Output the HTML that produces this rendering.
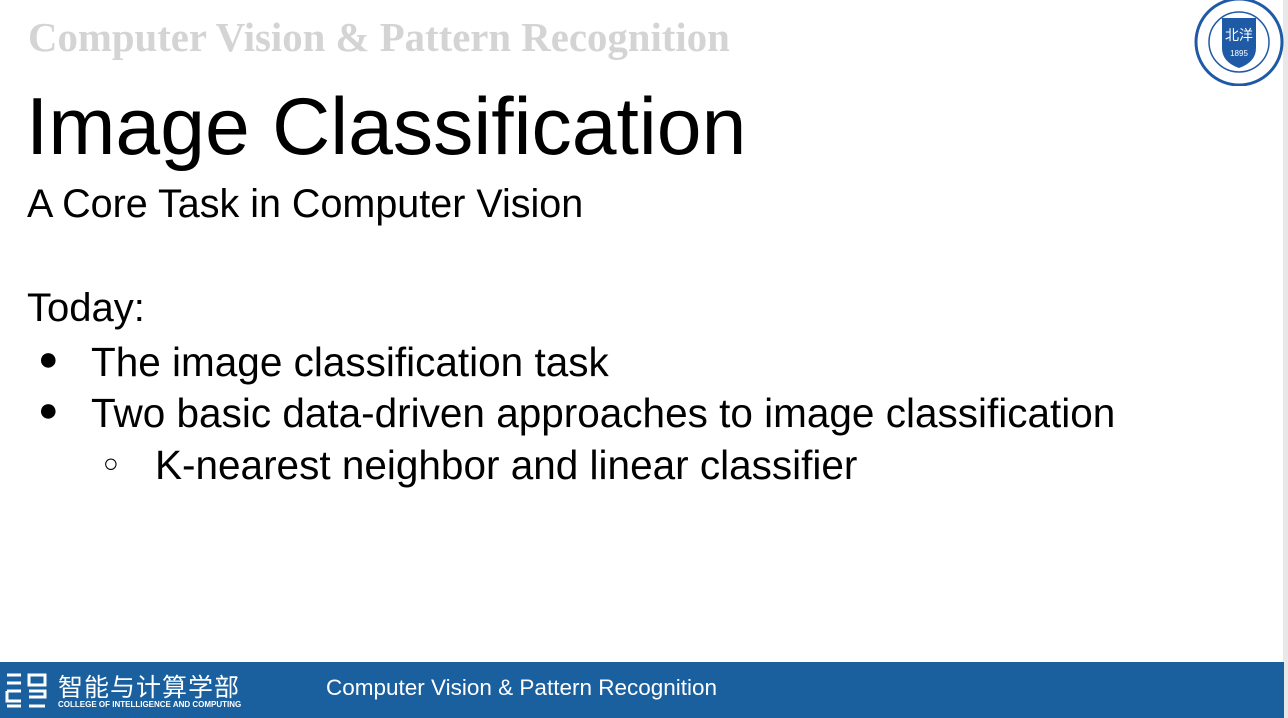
<!DOCTYPE html>
<html><head><meta charset="utf-8"><style>
body{margin:0;width:1288px;height:718px;overflow:hidden;background:#fff;position:relative;font-family:"Liberation Sans","Noto Sans CJK SC",sans-serif;}
.t{position:absolute;white-space:nowrap;color:#000;}
</style></head><body>
<div class="t" style="left:28px;top:14px;font-family:'Liberation Serif',serif;font-weight:bold;font-size:40.8px;color:#d4d4d4;">Computer Vision &amp; Pattern Recognition</div>
<div class="t" style="left:26px;top:81px;font-size:80.5px;">Image Classification</div>
<div class="t" style="left:27px;top:182px;font-size:39.5px;">A Core Task in Computer Vision</div>
<div class="t" style="left:27px;top:286px;font-size:40px;">Today:</div>
<div class="t" style="left:38px;top:340px;font-size:34px;">●</div>
<div class="t" style="left:91px;top:339px;font-size:40.5px;">The image classification task</div>
<div class="t" style="left:38px;top:391px;font-size:34px;">●</div>
<div class="t" style="left:91px;top:390px;font-size:40.5px;">Two basic data-driven approaches to image classification</div>
<div class="t" style="left:103px;top:448px;font-size:26px;">○</div>
<div class="t" style="left:155px;top:442px;font-size:40.5px;">K-nearest neighbor and linear classifier</div>
<div style="position:absolute;right:0;top:0;width:5px;height:718px;background:#e8e8e8"></div>
<svg style="position:absolute;left:1194px;top:0" width="90" height="86" viewBox="0 0 90 86">
<circle cx="45" cy="42" r="43" fill="#fff" stroke="#1f5aa6" stroke-width="3"/>
<circle cx="45" cy="42" r="30" fill="none" stroke="#1f5aa6" stroke-width="1.5"/>
<path d="M28 18 L62 18 L62 48 Q62 62 45 68 Q28 62 28 48 Z" fill="#1f5aa6"/>
<text x="45" y="40" font-size="14" fill="#fff" text-anchor="middle" font-family="Noto Sans CJK SC">北洋</text>
<text x="45" y="56" font-size="8" fill="#fff" text-anchor="middle">1895</text>
</svg>
<div style="position:absolute;left:0;top:662px;width:1284px;height:56px;background:#1a5f9e"></div>
<svg style="position:absolute;left:5px;top:671px" width="44" height="38" viewBox="0 0 44 38">
<g fill="none" stroke="#fff" stroke-width="3"><path d="M2 4h14M2 12h14M2 20h14M2 20v10h14"/><path d="M24 4h16v10H24zM24 20h16v6H24M2 35h14M24 35h16"/></g>
</svg>
<div class="t" style="left:58px;top:668px;font-size:25px;color:#fff;font-family:'Noto Sans CJK SC',sans-serif;letter-spacing:1px;">智能与计算学部</div>
<div class="t" style="left:58px;top:700px;font-size:8px;color:#fff;font-weight:bold;">COLLEGE OF INTELLIGENCE AND COMPUTING</div>
<div class="t" style="left:326px;top:675px;font-size:22.5px;color:#fff;">Computer Vision &amp; Pattern Recognition</div>
</body></html>
